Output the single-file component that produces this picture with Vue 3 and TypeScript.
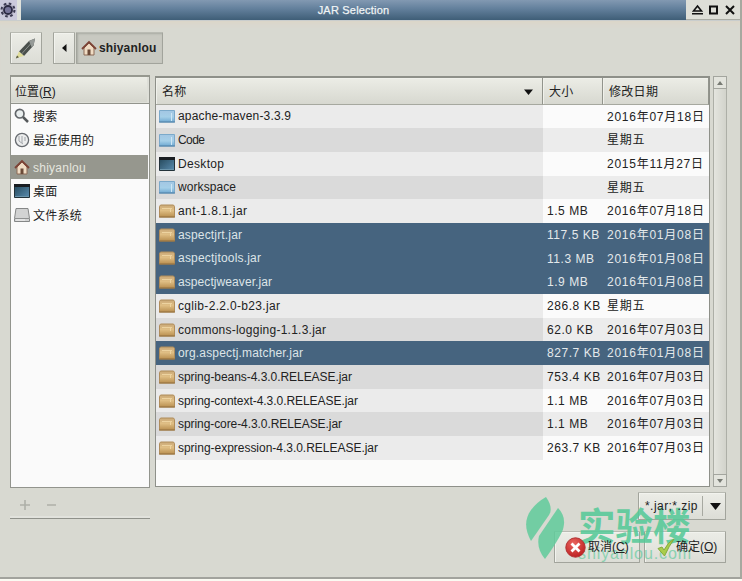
<script setup lang="ts">
type Kind = 'folder' | 'desktop' | 'jar'

interface FileEntry {
  name: string
  kind: Kind
  size: string
  date: string
  width: number
  selected?: boolean
}

const files: FileEntry[] = [
  { name: 'apache-maven-3.3.9', kind: 'folder', size: '', date: '2016年07月18日', width: 113 },
  { name: 'Code', kind: 'folder', size: '', date: '星期五', width: 27 },
  { name: 'Desktop', kind: 'desktop', size: '', date: '2015年11月27日', width: 46 },
  { name: 'workspace', kind: 'folder', size: '', date: '星期五', width: 58 },
  { name: 'ant-1.8.1.jar', kind: 'jar', size: '1.5 MB', date: '2016年07月18日', width: 69 },
  { name: 'aspectjrt.jar', kind: 'jar', size: '117.5 KB', date: '2016年01月08日', width: 64, selected: true },
  { name: 'aspectjtools.jar', kind: 'jar', size: '11.3 MB', date: '2016年01月08日', width: 83, selected: true },
  { name: 'aspectjweaver.jar', kind: 'jar', size: '1.9 MB', date: '2016年01月08日', width: 94, selected: true },
  { name: 'cglib-2.2.0-b23.jar', kind: 'jar', size: '286.8 KB', date: '星期五', width: 102 },
  { name: 'commons-logging-1.1.3.jar', kind: 'jar', size: '62.0 KB', date: '2016年07月03日', width: 148 },
  { name: 'org.aspectj.matcher.jar', kind: 'jar', size: '827.7 KB', date: '2016年01月08日', width: 125, selected: true },
  { name: 'spring-beans-4.3.0.RELEASE.jar', kind: 'jar', size: '753.4 KB', date: '2016年07月03日', width: 174 },
  { name: 'spring-context-4.3.0.RELEASE.jar', kind: 'jar', size: '1.1 MB', date: '2016年07月03日', width: 180 },
  { name: 'spring-core-4.3.0.RELEASE.jar', kind: 'jar', size: '1.1 MB', date: '2016年07月03日', width: 164 },
  { name: 'spring-expression-4.3.0.RELEASE.jar', kind: 'jar', size: '263.7 KB', date: '2016年07月03日', width: 200 },
]
</script>

<template>
  <div class="window">
    <svg class="defs" width="0" height="0">
      <defs>
        <linearGradient id="gFolder" x1="0" y1="0" x2="0" y2="1"><stop offset="0" stop-color="#a3c6e3" /><stop offset=".55" stop-color="#a5cfe8" /><stop offset="1" stop-color="#6fa9d2" /></linearGradient>
        <linearGradient id="gJar" x1="0" y1="0" x2="0" y2="1"><stop offset="0" stop-color="#c9a878" /><stop offset=".45" stop-color="#e0bf85" /><stop offset="1" stop-color="#b98f50" /></linearGradient>
        <linearGradient id="gDesk" x1="0" y1="0" x2="1" y2="1"><stop offset="0" stop-color="#234658" /><stop offset="1" stop-color="#5b8db0" /></linearGradient>
        <radialGradient id="gRed" cx=".4" cy=".3" r=".8"><stop offset="0" stop-color="#ea6660" /><stop offset="1" stop-color="#b8181a" /></radialGradient>
        <symbol id="home" viewBox="0 0 16 16">
          <path d="M3 8v7h10V8L8 3z" fill="#f0dcc4" stroke="#8c6b57" />
          <path d="M1 9l7-7 7 7" fill="none" stroke="#7c4336" stroke-width="1.8" />
          <path d="M6.500 9.500h3V15h-3z" fill="#6b4a38" />
        </symbol>
        <symbol id="desktop" viewBox="0 0 16 14">
          <path d="M.5.5h15v13H.5z" fill="url(#gDesk)" stroke="#23323a" />
          <path d="M0 0h16v3H0z" fill="#191d22" />
          <path d="M1 12.500h14" stroke="#6b95ac" />
        </symbol>
        <symbol id="folder" viewBox="0 0 16 14">
          <path d="M.5 1.500h15v11.500H.5z" fill="url(#gFolder)" stroke="#7ba9ca" />
          <path d="M12.500 4v8" stroke="#cfe6f4" />
          <path d="M0 13h16" stroke="#4d7fa6" />
        </symbol>
        <symbol id="jar" viewBox="0 0 16 14">
          <path d="M.5 2.500L1.500 1h13l1 1.500V13H.5z" fill="url(#gJar)" stroke="#b08d5b" />
          <path d="M3 4.500h10M11.500 4v4" stroke="#edd3a0" />
          <path d="M0 13h16" stroke="#96713c" />
        </symbol>
      </defs>
    </svg>

    <header class="titlebar">
      <div class="appicon">
        <svg width="16" height="16" viewBox="0 0 16 16">
          <circle cx="8" cy="8" r="6.500" fill="#b4b1c6" stroke="#3c3a52" stroke-width="2" stroke-dasharray="2.600 2.500" />
          <circle cx="8" cy="8" r="4" fill="#77749a" stroke="#2b2942" stroke-width="1.800" />
        </svg>
      </div>
      <div class="title">JAR Selection</div>
      <div class="controls">
        <svg width="47" height="14" viewBox="0 0 47 14" fill="none" stroke="#111" stroke-width="2">
          <path d="M1.500 8L5.500 3l4 5zM0 10.800h11" stroke-width="1.600" />
          <path d="M18 3.500h7v7h-7z" />
          <path d="M34 3l8 8M42 3l-8 8" />
        </svg>
      </div>
    </header>

    <div class="toolbar">
      <button class="btn pencil">
        <svg width="24" height="25" viewBox="0 0 24 25">
          <path d="M5 15.500L15 5l6-2.500-1.500 7L10 20z" fill="#4a504c" />
          <path d="M15 5l6-2.500-1.500 7-2 1.500z" fill="#969b98" />
          <path d="M7.500 18L17 7.500" stroke="#8b918d" />
          <path d="M5 15.500L2 22l8-2z" fill="#dfdc97" />
          <path d="M3 19.500L1.800 22.500 5 21.300z" fill="#55573f" />
        </svg>
      </button>
      <button class="btn back"><svg width="5" height="8" viewBox="0 0 5 8"><path d="M4.500 0v8L0 4z" fill="#111" /></svg></button>
      <button class="btn crumb"><svg width="16" height="16"><use href="#home" /></svg><span>shiyanlou</span></button>
    </div>

    <main class="body">
      <aside class="places">
        <div class="places-head">位置(<u>R</u>)</div>
        <div class="places-list">
          <div class="place">
            <svg width="16" height="16" viewBox="0 0 16 16"><circle cx="5.700" cy="5.700" r="4.300" fill="#e9eeee" stroke="#62666a" stroke-width="1.700" /><path d="M9 9l5 5" stroke="#55595b" stroke-width="2.500" /></svg>
            <span>搜索</span>
          </div>
          <div class="place recent">
            <svg width="16" height="16" viewBox="0 0 16 16"><circle cx="8" cy="8" r="6.600" fill="#eceded" stroke="#676b70" stroke-width="1.300" /><path d="M5 4v5l4 3M8 4v7M11 5v4" stroke="#a2a6ab" fill="none" /></svg>
            <span>最近使用的</span>
          </div>
          <div class="place active"><svg width="16" height="16"><use href="#home" /></svg><span>shiyanlou</span></div>
          <div class="place"><svg width="16" height="14"><use href="#desktop" /></svg><span>桌面</span></div>
          <div class="place">
            <svg width="16" height="16" viewBox="0 0 16 16"><path d="M2 1.500h12l1.500 10v3H.5v-3z" fill="#d2d3d3" stroke="#858787" /><path d="M1 11.500h14" stroke="#8f9191" /><path d="M2 13h9" stroke="#f4f4f4" /></svg>
            <span>文件系统</span>
          </div>
        </div>
        <div class="places-tools">
          <svg width="40" height="12" viewBox="0 0 40 12"><path d="M5 1v10M0 6h10M27 6h9" stroke="#aeb0a8" stroke-width="1.600" /></svg>
        </div>
      </aside>

      <section class="browser">
        <div class="table">
          <div class="row head">
            <div class="cell">名称<svg width="9" height="6" viewBox="0 0 9 6"><path d="M0 .5h9L4.500 6z" fill="#111" /></svg></div>
            <div class="cell">大小</div>
            <div class="cell">修改日期</div>
          </div>
          <div v-for="f in files" :key="f.name" class="row file" :class="{ selected: f.selected }">
            <div class="name">
              <svg width="16" height="14"><use :href="'#' + f.kind" /></svg>
              <svg class="label" :width="f.width + 2" height="18"><text x="0" y="13" :textLength="f.width">{{ f.name }}</text></svg>
            </div>
            <div class="size">{{ f.size }}</div>
            <div class="date">{{ f.date }}</div>
          </div>
        </div>
        <div class="scroll">
          <div class="arrow"><svg width="6" height="4" viewBox="0 0 6 4"><path d="M0 4h6L3 0z" fill="#777a73" /></svg></div>
          <div class="thumb"></div>
          <div class="arrow"><svg width="6" height="4" viewBox="0 0 6 4"><path d="M0 0h6L3 4z" fill="#777a73" /></svg></div>
        </div>
      </section>
    </main>

    <footer class="footer">
      <button class="btn filter"><span>*.jar;*.zip</span><i></i><svg width="11" height="7" viewBox="0 0 11 7"><path d="M0 0h11L5.500 7z" fill="#111" /></svg></button>
      <div class="actions">
        <button class="btn action">
          <svg width="21" height="21" viewBox="0 0 21 21"><circle cx="10.500" cy="10.500" r="9.700" fill="url(#gRed)" stroke="#b03536" /><path d="M6.500 6.500l8 8M14.500 6.500l-8 8" stroke="#fff" stroke-width="2.800" /></svg>
          <span>取消(<u>C</u>)</span>
        </button>
        <button class="btn action ok">
          <svg width="18" height="19" viewBox="0 0 18 19"><path d="M1 10.500l4-1.500 2 3Q11 4 17 1Q12 8 7.500 18z" fill="#a9cd4b" stroke="#83ab3c" /></svg>
          <span>确定(<u>O</u>)</span>
        </button>
      </div>
    </footer>

    <div class="watermark">
      <svg width="40" height="64" viewBox="0 0 40 64" fill="#62cc9c"><path d="M21 1C26 8 27 14 24 19L6 45C0 34-1 24 6 14Q12 6 21 1z" /><path d="M33 12C39 18 41 26 37 36Q31 48 20 63C14 56 12 48 14 40z" /></svg>
      <div class="mark">
        <div class="mark-cn">实验楼</div>
        <div class="mark-en">shiyanlou.com</div>
      </div>
    </div>
  </div>
</template>

<style>
body { margin: 0; background: #fafaf2; }
</style>

<style scoped>
.window {
  position: relative;
  box-sizing: border-box;
  width: 742px;
  height: 579px;
  background: #d8d9d1;
  border-right: 2px solid #a6a89f;
  border-bottom: 2px solid #a2a39d;
  font: 12px/18px "Liberation Sans", "Noto Sans CJK SC", sans-serif;
  color: #222;
  overflow: hidden;
}
.defs { display: block; height: 0; }
svg { display: block; flex: none; }
.titlebar { display: flex; height: 20px; }
.appicon { box-sizing: border-box; width: 21px; padding-top: 2px; background: #cbc9dc; border-right: 4px solid #dfe1dc; }
.title { flex: 1; height: 20px; background: linear-gradient(#8299b2, #627f9b 45%, #3f5e77); color: #f0f4f5; text-align: center; font: 11px/20px "Liberation Sans", sans-serif; letter-spacing: .2px; -webkit-text-stroke: .25px #f0f4f5; }
.controls { width: 54px; box-sizing: border-box; padding: 3px 0 0 6px; background: #dedfd8; border-bottom: 1px solid #aaaca4; }
.toolbar { display: flex; height: 57px; padding: 11px 0 0 10px; box-sizing: border-box; border-top: 1px solid #c9cdcd; box-shadow: inset 0 6px 4px -3px #dcd6c9; }
.btn { display: flex; align-items: center; box-sizing: border-box; margin: 0; padding: 0; border: 1px solid #a2a49c; border-top-color: #b9bbb3; border-radius: 1px; background: linear-gradient(#ecede7, #dcddd6); font: inherit; color: #222; box-shadow: inset 1px 1px 0 #f2f3ee; }
.pencil { width: 32px; height: 32px; padding-left: 3px; }
.back { width: 22px; height: 32px; margin-left: 11px; justify-content: center; }
.crumb { width: 87px; height: 32px; margin-left: 1px; padding-left: 4px; gap: 2px; background: #c8c9c1; box-shadow: inset 1px 1px 2px #a9aba3; font-weight: 700; font-size: 12px; letter-spacing: .15px; }
.crumb span { white-space: nowrap; }
.body { display: flex; height: 443px; padding-left: 10px; gap: 5px; }
.places { display: flex; flex-direction: column; width: 140px; }
.places-head { height: 29px; box-sizing: border-box; border: 1px solid #92948d; border-top: 2px solid #96988f; background: linear-gradient(#ecede6, #d4d5cd); padding: 6px 0 0 4px; margin-top: -2px; box-shadow: inset -2px -1px 0 #dedfd8; white-space: nowrap; }
.places-list { height: 384px; box-sizing: border-box; background: #fafafa; border: 1px solid #92948d; border-top: 0; }
.place { display: flex; align-items: center; height: 24px; padding-left: 3px; gap: 3px; letter-spacing: .25px; }
.place span { padding-top: 1px; }
.recent { margin-bottom: 3px; }
.active { background: #96978e; color: #e5e6df; margin-right: 1px; }
.places-tools { height: 31px; box-sizing: border-box; border-bottom: 1px solid #8f918a; box-shadow: inset 0 -3px 0 -1px #e1e2dc; padding: 11px 0 0 10px; }
.browser { display: flex; gap: 3px; height: 411px; margin-top: -1px; }
.table { width: 555px; box-sizing: border-box; border: 1px solid #8e9089; border-top-width: 2px; background: #fbfbfa; height: 411px; }
.row { display: grid; grid-template-columns: 387px 60px 1fr; }
.head { height: 26.500px; background: linear-gradient(#ecede6, #d6d7cf); }
.cell { display: flex; align-items: center; justify-content: space-between; padding: 2px 9px 0 6px; box-sizing: border-box; border-right: 1px solid #92948c; border-bottom: 1px solid #a6a89f; box-shadow: inset 1px 1px 0 #f0f1eb; letter-spacing: .3px; }
.file { height: 23.700px; line-height: 23.700px; }
.name { display: flex; align-items: center; padding-left: 3px; gap: 3px; background: #ebebeb; }
.label { font-size: 12px; fill: #222; }
.size, .date { box-sizing: border-box; height: 23.700px; padding: 1px 0 0 4px; line-height: 23px; white-space: nowrap; background: #fbfbfb; }
.size { letter-spacing: .55px; }
.date { letter-spacing: .75px; }
.file:nth-child(odd) .name { background: #dadada; }
.file:nth-child(odd) .size, .file:nth-child(odd) .date { background: #ececec; }
.file.selected .name, .file.selected .size, .file.selected .date { background: #46647f; color: #e4e9eb; }
.file.selected .label { fill: #dde5e8; }
.scroll { display: flex; flex-direction: column; width: 14px; height: 411px; }
.arrow { display: flex; align-items: center; justify-content: center; box-sizing: border-box; height: 13px; border: 1px solid #a3a59e; background: #e3e4dd; }
.thumb { flex: 1; border: solid #adafa7; border-width: 0 1px; background: linear-gradient(90deg, #e4e5df, #d2d3cb); }
.footer { display: flex; flex-direction: column; align-items: flex-end; margin-top: -28px; padding-right: 14px; gap: 11px; }
.footer span, .footer svg { position: relative; z-index: 2; }
.filter { width: 88px; height: 28px; padding-left: 6px; }
.filter span { width: 57px; text-align: left; white-space: nowrap; letter-spacing: .45px; }
.filter i { width: 1px; height: 20px; background: #a7a9a1; margin-right: 7px; }
.actions { display: flex; gap: 4px; }
.action { width: 86px; height: 32px; padding-left: 10px; gap: 2px; white-space: nowrap; }
.action.ok { width: 82px; padding-left: 12px; gap: 1px; }
.watermark { position: absolute; z-index: 1; left: 525px; top: 496px; display: flex; gap: 13px; color: #54c997; opacity: .86; pointer-events: none; }
.mark { padding-top: 7px; }
.mark-cn { font: 700 37.500px/42px "Noto Sans CJK SC", sans-serif; }
.mark-en { font: 400 16px/16px "Liberation Sans", sans-serif; opacity: .7; margin-top: 1px; letter-spacing: .9px; }
</style>
